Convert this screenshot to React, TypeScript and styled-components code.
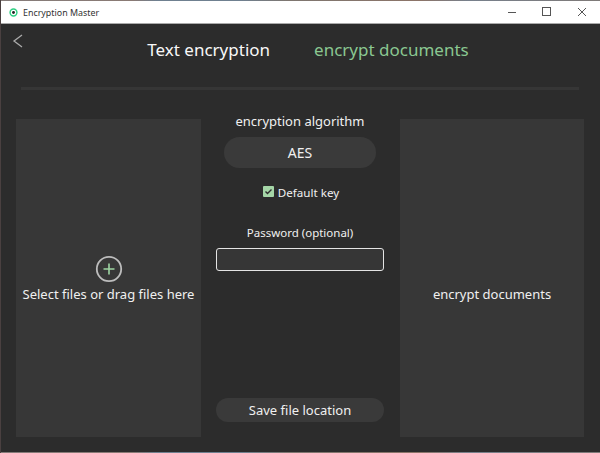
import React from "react";
import styled, { createGlobalStyle } from "styled-components";

const Global = createGlobalStyle`
  html, body { margin: 0; padding: 0; width: 600px; height: 453px; overflow: hidden; background: #2c2c2c; }
  * { box-sizing: border-box; }
`;
const Win = styled.div`
  width: 600px; height: 453px; display: flex; flex-direction: column;
  background: #2c2c2c; color: #f0f0f0;
  font-family: "Noto Sans", "Open Sans", sans-serif;
  border-left: 1px solid #4a4040;
`;
const DesktopEdge = styled.div<{ $h: number }>`
  height: ${p => p.$h}px; flex: none;
  background: linear-gradient(90deg, #857c7a 0, #8a7a74 22%, #6f8090 26%, #6f8090 40%, #7e7670 48%, #8c7468 70%, #77808c 78%, #7f7a78 100%);
`;
const TitleBar = styled.div`
  height: 23px; flex: none; background: #fff; color: #333; display: flex; align-items: center;
  padding-left: 8px; font-size: 8.9px; border-bottom: 1px solid #aaa;
`;
const AppIcon = styled.svg`width: 9px; height: 9px; margin-right: 5px;`;
const Controls = styled.div`margin-left: auto; display: flex;`;
const Ctl = styled.div`width: 35px; height: 22px; display: flex; align-items: center; justify-content: center; position: relative; left: -1px;`;
const Body = styled.div`flex: 1; min-height: 0; display: flex; flex-direction: column; padding: 0 16px 15px 15px; position: relative;`;
const Back = styled.svg`position: absolute; left: 11px; top: 9px; width: 12px; height: 16px;`;
const Tabs = styled.div`height: 66px; flex: none; border-bottom: 3px solid #363636; margin: 0 5px; display: flex; justify-content: center; padding: 13px 0 0 16px; gap: 44px; font-size: 17px;`;
const Tab = styled.div<{ $active?: boolean }>`color: ${p => (p.$active ? "#8ac791" : "#f8f8f8")}; line-height: 26px;`;
const Columns = styled.div`flex: 1; display: grid; grid-template-columns: 185px 1fr 184px; margin-top: 29px; min-height: 0;`;
const Drop = styled.div<{ $offset: number }>`background: #373737; display: flex; flex-direction: column; align-items: center; justify-content: center; font-size: 13px; padding-top: ${p => p.$offset}px;`;
const Plus = styled.svg`margin-top: -32px; margin-bottom: 2px;`;
const Center = styled.div`display: flex; flex-direction: column; align-items: center; padding-right: 1px;`;
const Label = styled.div`font-size: 13px; line-height: 18px; margin-top: -7px;`;
const Pill = styled.div<{ $w: number; $h: number; $f: number }>`width: ${p => p.$w}px; height: ${p => p.$h}px; border-radius: ${p => p.$h / 2}px; background: #3a3a3a; display: flex; align-items: center; justify-content: center; font-size: ${p => p.$f}px;`;
const Algo = styled(Pill)`margin-top: 7px;`;
const Save = styled(Pill)`margin-bottom: 15px;`;
const Check = styled.div`display: flex; align-items: center; font-size: 11.6px; margin-top: 16px; gap: 4px; line-height: 17px; padding-left: 2px;`;
const Box = styled.svg`width: 11px; height: 11px; position: relative; top: -1px;`;
const Small = styled.div`font-size: 11.5px; margin-top: 23px; line-height: 17px;`;
const Input = styled.div`width: 168px; height: 23px; border: 1px solid #e4e4e4; border-radius: 3px; background: #363636; margin-top: 7px;`;
const Spacer = styled.div`flex: 1;`;

export default function App() {
  return (
    <Win>
      <Global />
      <DesktopEdge $h={1} />
      <TitleBar>
        <AppIcon viewBox="0 0 10 10"><circle cx="5" cy="5" r="3.8" fill="none" stroke="#2fcf83" strokeWidth="1.6" /><circle cx="5" cy="5" r="1.6" fill="#222" /></AppIcon>
        Encryption Master
        <Controls>
          <Ctl><svg width="10" height="10"><path d="M1 5.5h8" stroke="#555" /></svg></Ctl>
          <Ctl><svg width="10" height="10"><rect x=".5" y=".5" width="8" height="8" fill="none" stroke="#555" /></svg></Ctl>
          <Ctl><svg width="10" height="10"><path d="M1 1l8 8M9 1l-8 8" stroke="#555" /></svg></Ctl>
        </Controls>
      </TitleBar>
      <Body>
        <Back viewBox="0 0 12 16"><path d="M10 2L2 8l8 6" fill="none" stroke="#aaa" strokeWidth="1.3" /></Back>
        <Tabs><Tab>Text encryption</Tab><Tab $active>encrypt documents</Tab></Tabs>
        <Columns>
          <Drop $offset={33}>
            <Plus width="28" height="28" viewBox="0 0 28 28"><circle cx="14" cy="14" r="12.2" fill="none" stroke="#bdbdbd" strokeWidth="1.8" /><path d="M14 8.5v11M8.5 14h11" stroke="#9ed5a3" strokeWidth="1.6" /></Plus>
            <div>Select files or drag files here</div>
          </Drop>
          <Center>
            <Label>encryption algorithm</Label>
            <Algo $w={152} $h={31} $f={14}>AES</Algo>
            <Check><Box viewBox="0 0 11 11"><rect width="11" height="11" rx="1" fill="#a5d6a7" /><path d="M2.5 5.5l2 2 4-4" fill="none" stroke="#2c2c2c" strokeWidth="1.4" /></Box>Default key</Check>
            <Small>Password (optional)</Small>
            <Input />
            <Spacer />
            <Save $w={168} $h={24} $f={13}>Save file location</Save>
          </Center>
          <Drop $offset={31}>encrypt documents</Drop>
        </Columns>
      </Body>
      <DesktopEdge $h={1} />
    </Win>
  );
}
